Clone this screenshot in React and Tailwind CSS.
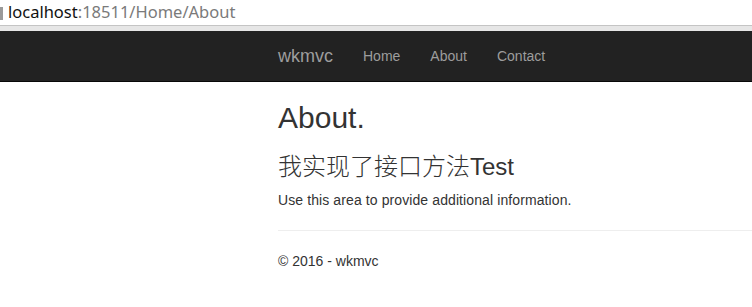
import React from 'react';

const App = () => {
  return (
    <div className="min-h-[307px] bg-white font-['Liberation_Sans','Noto_Sans_CJK_SC',sans-serif] text-[#333]">
      {/* Browser address bar */}
      <div className="relative flex h-[25px] items-center bg-white pl-[8px] font-['Noto_Sans',sans-serif] text-[16.5px] leading-none">
        <div className="absolute left-0 top-[7px] h-[13px] w-[3px] bg-[#9a9a9a]" />
        <span className="text-[#111]">localhost</span>
        <span className="text-[#7a7a7a]">:18511/Home/About</span>
      </div>
      <div className="h-px bg-[#c4c4c4]" />
      <div className="h-[5px] bg-[#e6e6e6]" />

      {/* Navbar */}
      <nav className="flex h-[51px] items-start border-b border-[#080808] bg-[#222] pl-[263px]">
        <a className="px-[15px] py-[15px] text-[18px] leading-[20px] text-[#9d9d9d]">wkmvc</a>
        <ul className="flex">
          <li><a className="block px-[15px] py-[15px] text-[14px] leading-[20px] text-[#9d9d9d]">Home</a></li>
          <li><a className="block px-[15px] py-[15px] text-[14px] leading-[20px] text-[#9d9d9d]">About</a></li>
          <li><a className="block px-[15px] py-[15px] text-[14px] leading-[20px] text-[#9d9d9d]">Contact</a></li>
        </ul>
      </nav>

      {/* Body content */}
      <div className="pl-[278px]">
        <h2 className="mt-[19px] mb-[10px] text-[30px] leading-[33px]">About.</h2>
        <h3 className="mt-[20px] mb-[10px] text-[24px] leading-[26px] font-light">我实现了接口方法Test</h3>
        <p className="text-[14px] leading-[20px] tracking-[0.1px]">Use this area to provide additional information.</p>
        <hr className="mt-[20px] mb-[20px] border-t border-[#eee]" />
        <footer>
          <p className="text-[14px] leading-[20px]">© 2016 - wkmvc</p>
        </footer>
      </div>
    </div>
  );
};

export default App;
